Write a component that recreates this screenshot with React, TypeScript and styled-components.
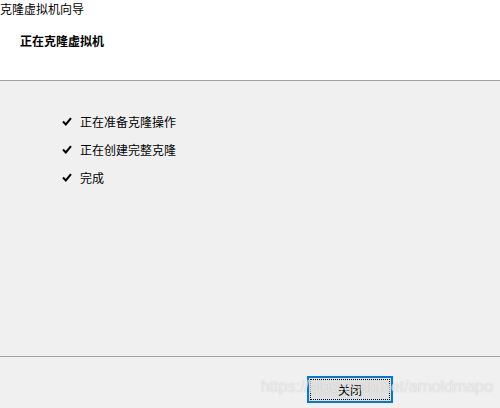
import styled, { createGlobalStyle } from "styled-components"

const GlobalStyle = createGlobalStyle`
  html, body {
    margin: 0;
    padding: 0;
    background: #ffffff;
  }
  body {
    font-family: "Noto Sans CJK SC", "Liberation Sans", sans-serif;
    font-size: 12px;
    color: #000;
  }
`

const Window = styled.div`
  width: 500px;
  height: 408px;
  display: flex;
  flex-direction: column;
  overflow: hidden;
  position: relative;
`

const Header = styled.div`
  height: 80px;
  background: #ffffff;
  border-bottom: 1px solid #a0a0a0;
  display: flex;
  flex-direction: column;
`

const WindowTitle = styled.div`
  height: 17px;
  line-height: 17px;
`

const StepTitle = styled.div`
  margin-top: 15px;
  padding-left: 20px;
  font-weight: bold;
  line-height: 17px;
`

const Body = styled.div`
  flex: 1;
  background: #f0f0f0;
  border-bottom: 1px solid #a0a0a0;
  padding: 32px 0 0 62px;
  display: flex;
  flex-direction: column;
  gap: 11px;
`

const StepRow = styled.div`
  display: flex;
  align-items: center;
  gap: 8px;
  height: 17px;
`

const Footer = styled.div`
  height: 51px;
  background: #f0f0f0;
  display: flex;
  justify-content: flex-end;
  align-items: flex-start;
  padding: 19px 107px 0 0;
  box-sizing: border-box;
`

const Button = styled.button`
  width: 86px;
  height: 27px;
  box-sizing: border-box;
  border: 2px solid #0078d7;
  background: #e1e1e1;
  padding: 1px;
  font: inherit;
  color: #000;
  display: flex;
  align-items: stretch;
`

const FocusRect = styled.span`
  flex: 1;
  border: 1px dotted #000;
  display: flex;
  align-items: center;
  justify-content: center;
`

/* csdn watermark lying over the footer */
const Watermark = styled.div`
  position: absolute;
  left: 261px;
  top: 378px;
  font-family: "Liberation Sans", sans-serif;
  font-size: 16px;
  line-height: 18px;
  color: rgba(255, 255, 255, 0.65);
  text-shadow: 0 0 1px rgba(110, 110, 110, 0.4);
  pointer-events: none;
  white-space: nowrap;
`

const Check = () => (
  <svg width="10" height="9" viewBox="0 0 10 9">
    <path d="M1 4.5 L3.8 7.5 L9 1.2" fill="none" stroke="#000" strokeWidth="2" />
  </svg>
)

const steps = ["正在准备克隆操作", "正在创建完整克隆", "完成"]

export default function App() {
  return (
    <>
      <GlobalStyle />
      <Window>
        <Header>
          <WindowTitle>克隆虚拟机向导</WindowTitle>
          <StepTitle>正在克隆虚拟机</StepTitle>
        </Header>
        <Body>
          {steps.map((s) => (
            <StepRow key={s}>
              <Check />
              <span>{s}</span>
            </StepRow>
          ))}
        </Body>
        <Footer>
          <Button>
            <FocusRect>关闭</FocusRect>
          </Button>
        </Footer>
        <Watermark>https://blog.csdn.net/arnoldmapo</Watermark>
      </Window>
    </>
  )
}
